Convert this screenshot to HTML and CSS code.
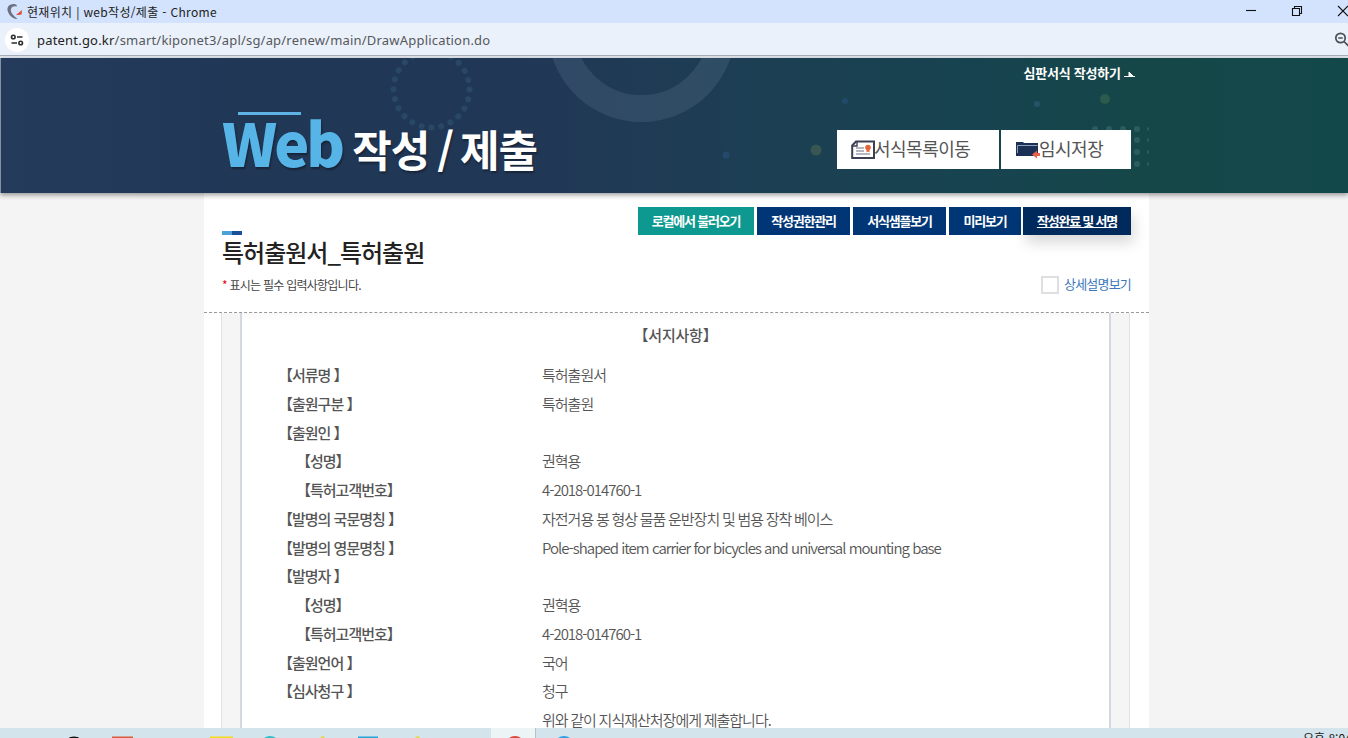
FILE: index.html
```html
<!DOCTYPE html>
<html lang="ko">

<head>
    <meta charset="UTF-8">
    <title>현재위치 | web작성/제출</title>
    <link rel="stylesheet" href="styles.css">
</head>

<body>
    <div class="titlebar">
        <svg class="favicon" width="18" height="18" viewBox="0 0 18 18">
            <path d="M8 1C2 1 0 5 2.500 10c2 4 6 6 9 6C7.500 13 4 9 5 6c.8-2.500 3-3 6-2.500C11 2 10 1 8 1z" fill="#6d7180" />
            <path d="M10 12l6-5-.5 4.500-3.500.5z" fill="#e04a32" />
        </svg>
        <span class="window-title">현재위치 | web작성/제출 - Chrome</span>
        <svg class="window-buttons" width="108" height="23" viewBox="0 0 108 23" fill="none" stroke="#111" stroke-width="1.1">
            <path d="M6 10.5h10" />
            <path d="M52.5 8.5h7v7h-7zM54.5 8.5v-2h7v7h-2" />
            <path d="M98 6l10 10M108 6l-10 10" />
        </svg>
    </div>
    <div class="addressbar">
        <div class="site-info">
            <svg width="14" height="14" viewBox="0 0 14 14" fill="none" stroke="#2b2d30" stroke-width="1.6">
                <circle cx="3.3" cy="4" r="1.8" />
                <path d="M7 4h5.5M1.5 10H7" />
                <circle cx="10.7" cy="10" r="1.8" />
            </svg>
        </div>
        <span class="url"><b>patent.go.kr</b>/smart/kiponet3/apl/sg/ap/renew/main/DrawApplication.do</span>
        <svg class="zoom-icon" width="14" height="16" viewBox="0 0 14 16" fill="none" stroke="#4a4d52" stroke-width="1.7">
            <circle cx="6.500" cy="6" r="4.7" />
            <path d="M4.300 6h4.4M10 9.5l5 5" />
        </svg>
    </div>

    <header>
        <div class="header-inner">
            <svg class="header-deco" width="945" height="135" viewBox="0 0 945 135">
                <circle cx="227.500" cy="31.500" r="38" fill="none" stroke="#294865" stroke-width="6" stroke-linecap="round" stroke-dasharray="0.01 9.94" />
                <circle cx="437.500" cy="-30" r="80.500" fill="none" stroke="#8aa0b8" stroke-opacity=".16" stroke-width="27" />
                <circle cx="522" cy="97" r="3.5" fill="#24496a" />
                <circle cx="612" cy="92" r="5.5" fill="#3a5652" />
                <circle cx="641" cy="43" r="3" fill="#204a68" />
                <circle cx="833" cy="46" r="3" fill="#235468" />
                <circle cx="901" cy="41" r="5" fill="#2c5a4c" />
                <g fill="#2d5c60">
                    <circle cx="891" cy="71" r="3" />
                    <circle cx="905" cy="71" r="3" />
                    <circle cx="919" cy="71" r="3" />
                    <circle cx="933" cy="71" r="3" />
                    <circle cx="933" cy="82" r="3" />
                    <circle cx="933" cy="94" r="3" />
                    <circle cx="933" cy="106" r="3" />
                    <circle cx="945" cy="71" r="2" />
                    <circle cx="945" cy="82" r="2" />
                    <circle cx="945" cy="94" r="2" />
                    <circle cx="945" cy="106" r="2" />
                </g>
            </svg>
            <h1 class="logo"><span class="web">Web</span><span class="kor">작성</span><span class="slash">/</span><span class="kor">제출</span></h1>
            <div class="header-right">
                <a class="trial-link">심판서식 작성하기
                    <svg width="11" height="7" viewBox="0 0 11 7"><path d="M0 5.500h11M5 1l4.500 4.500H5z" fill="#fff" stroke="#fff" stroke-width="1" /></svg>
                </a>
                <div class="header-buttons">
                    <a class="list-btn">
                        <svg width="24" height="20" viewBox="0 0 24 20" fill="none">
                            <path d="M5 1.500h18v16.500H1.200V5.500z" stroke="#3b4152" stroke-width="2" />
                            <path d="M1 6h5V1" stroke="#3b4152" stroke-width="1.400" />
                            <path d="M5 8h8M5 11h8M5 14h14" stroke="#687080" stroke-width="1.200" />
                            <circle cx="17" cy="7.500" r="2.800" fill="#e8643c" />
                            <path d="M15.500 9h3v3.500L17 11.500l-1.500 1z" fill="#e8643c" />
                        </svg><span>서식목록이동</span></a>
                    <a class="save-btn">
                        <svg width="25" height="18" viewBox="0 0 25 18">
                            <path d="M1 1h7l1 1h14v13H1z" fill="#1c2f55" />
                            <path d="M2.500 12V4.500h20" fill="none" stroke="#8fa0bd" />
                            <path d="M17 13.500l5-4v2.500h3v3h-3v2.500z" fill="#e8604c" />
                        </svg><span>임시저장</span></a>
                </div>
            </div>
        </div>
    </header>

    <div class="content">
        <div class="form-head">
            <div class="form-title">
                <div class="title-mark"></div>
                <h2>특허출원서_특허출원</h2>
                <p><em>*</em> 표시는 필수 입력사항입니다.</p>
            </div>
            <div class="form-tools">
                <div class="tool-buttons">
                    <a class="local">로컬에서 불러오기</a>
                    <a class="w93">작성권한관리</a>
                    <a class="w93">서식샘플보기</a>
                    <a class="preview">미리보기</a>
                    <a class="complete">작성완료 및 서명</a>
                </div>
                <label class="detail"><span class="checkbox"></span>상세설명보기</label>
            </div>
        </div>
        <div class="paper-wrap">
            <div class="paper">
                <h3>【서지사항】</h3>
                <dl>
                    <dt>【서류명 】</dt><dd>특허출원서</dd>
                    <dt>【출원구분 】</dt><dd>특허출원</dd>
                    <dt>【출원인 】</dt><dd></dd>
                    <dt class="sub">【성명】</dt><dd>권혁용</dd>
                    <dt class="sub">【특허고객번호】</dt><dd>4-2018-014760-1</dd>
                    <dt>【발명의 국문명칭 】</dt><dd>자전거용 봉 형상 물품 운반장치 및 범용 장착 베이스</dd>
                    <dt>【발명의 영문명칭 】</dt><dd class="eng">Pole-shaped item carrier for bicycles and universal mounting base</dd>
                    <dt>【발명자 】</dt><dd></dd>
                    <dt class="sub">【성명】</dt><dd>권혁용</dd>
                    <dt class="sub">【특허고객번호】</dt><dd>4-2018-014760-1</dd>
                    <dt>【출원언어 】</dt><dd>국어</dd>
                    <dt>【심사청구 】</dt><dd>청구</dd>
                    <dt></dt><dd>위와 같이 지식재산처장에게 제출합니다.</dd>
                </dl>
            </div>
        </div>
    </div>

    <footer class="taskbar">
        <svg width="600" height="10" viewBox="0 0 600 10">
            <path d="M491 0h44v10h-44z" fill="#edf4f6" />
            <path d="M535.500 0v10" stroke="#b4c2c9" />
            <ellipse cx="74" cy="10.500" rx="5" ry="2" fill="#111" />
            <path d="M112 8.500h21V10h-21z" fill="#d65a3c" />
            <path d="M210 8.500h23V10h-23z" fill="#f2dc1c" />
            <circle cx="270" cy="18" r="10" fill="#35bcc4" />
            <path d="M320 10l3-2.500 2 2.500zM415 10l3-2.500 2 2.500z" fill="#e8d840" />
            <path d="M358 8.500h20V10h-20z" fill="#1ea4d8" />
            <circle cx="515" cy="18" r="10" fill="#d9453a" />
            <circle cx="564" cy="18" r="10" fill="#2f9fe6" />
        </svg>
        <span class="clock">오후 8:04</span>
    </footer>
</body>

</html>
```
FILE: styles.css
```css
* {
    box-sizing: border-box;
}

body {
    margin: 0;
    height: 738px;
    overflow: hidden;
    display: flex;
    flex-direction: column;
    background-color: #f4f4f4;
    font-family: "Noto Sans CJK KR", sans-serif;
    color: #555;
}

h1, h2, h3, p, dl, dd {
    margin: 0;
}

.titlebar {
    height: 23px;
    flex: none;
    display: flex;
    align-items: center;
    padding-left: 6px;
    background-color: #d3e3fd;
}

.window-title {
    margin-left: 3px;
    font-size: 12px;
    line-height: 23px;
    letter-spacing: 0.33px;
    color: #222;
}

.window-buttons {
    margin-left: auto;
}

.addressbar {
    height: 35px;
    flex: none;
    display: flex;
    align-items: center;
    padding-left: 5px;
    background-color: #ebf1fa;
    border-bottom: 2px solid #e4e7ee;
    box-shadow: inset 0 -1px #a9afb8;
}

.site-info {
    width: 24px;
    height: 24px;
    border-radius: 50%;
    background-color: #fff;
    display: flex;
    align-items: center;
    justify-content: center;
}

.url {
    margin-left: 8px;
    font-family: "Noto Sans", sans-serif;
    font-size: 13px;
    letter-spacing: 0.2px;
    color: #55585d;
}

.url b {
    font-weight: normal;
    color: #222;
}

.zoom-icon {
    margin-left: auto;
}

header {
    height: 135px;
    flex: none;
    position: relative;
    z-index: 1;
    border-left: 1px solid #8590a0;
    background: linear-gradient(90deg, #243b5c 0, #213756 18%, #213756 38%, #1f3b55 48%, #1b4052 60%, #174350 72%, #154748 85%, #13484a 100%);
    box-shadow: 0 2px 5px rgba(0, 0, 0, .4);
}

.header-inner {
    position: relative;
    width: 945px;
    height: 135px;
    margin-left: 203px;
    padding: 0 18px;
    display: flex;
    justify-content: space-between;
}

.header-deco {
    position: absolute;
    left: 0;
    top: 0;
}

.logo {
    position: relative;
    display: flex;
    align-items: baseline;
    height: 135px;
    line-height: 135px;
    padding-top: 16px;
    color: #fff;
    text-shadow: 1px 2px 2px rgba(0, 0, 0, .35);
}

.logo::before {
    content: "";
    position: absolute;
    left: 16px;
    top: 54px;
    width: 63px;
    height: 3px;
    background-color: #5fb3e4;
}

.logo .web {
    font-size: 59px;
    font-weight: 900;
    letter-spacing: -3px;
    color: #56b4e6;
    margin-right: 10px;
}

.logo .kor,
.logo .slash {
    font-size: 43px;
    font-weight: 700;
    letter-spacing: -1px;
}

.logo .slash {
    margin: 0 7px 0 8px;
}

.header-right {
    position: relative;
    display: flex;
    flex-direction: column;
    align-items: flex-end;
}

.trial-link {
    height: 72px;
    padding: 5px 0 0;
    margin-right: -4px;
    font-size: 13px;
    line-height: 20px;
    font-weight: bold;
    letter-spacing: -0.25px;
    color: #fff;
}

.header-buttons {
    display: flex;
    gap: 2px;
}

.header-buttons a {
    height: 39px;
    display: flex;
    align-items: center;
    padding-left: 14px;
    background-color: #fff;
    font-size: 18px;
    letter-spacing: -0.5px;
}

.header-buttons span {
    line-height: 36px;
    height: 39px;
    margin-left: -1px;
}

.list-btn {
    width: 162px;
}

.save-btn {
    width: 130px;
}

.content {
    flex: 1;
    min-height: 0;
    width: 945px;
    margin-left: 204px;
    background-color: #fff;
    display: flex;
    flex-direction: column;
}

.form-head {
    height: 120px;
    flex: none;
    display: flex;
    justify-content: space-between;
    padding: 0 18px;
    border-bottom: 1px dashed #999;
}

.title-mark {
    width: 20px;
    height: 4px;
    margin-top: 38px;
    background: linear-gradient(90deg, #4aa3d8 50%, #1b4f9c 50%);
}

.form-title h2 {
    margin-top: 1px;
    font-size: 24px;
    line-height: 32px;
    font-weight: 500;
    letter-spacing: -1px;
    color: #222;
}

.form-title p {
    margin-top: 7px;
    font-size: 12px;
    line-height: 20px;
    letter-spacing: -0.75px;
    color: #444;
}

.form-title em {
    color: #e00;
    font-style: normal;
}

.form-tools {
    display: flex;
    flex-direction: column;
    align-items: flex-end;
    padding-top: 14px;
}

.tool-buttons {
    display: flex;
    gap: 3px;
}

.tool-buttons a {
    height: 28px;
    line-height: 27px;
    text-align: center;
    background-color: #003675;
    color: #fff;
    font-size: 13px;
    font-weight: bold;
    letter-spacing: -1.2px;
}

.tool-buttons .local {
    width: 116px;
    background-color: #0d998f;
}

.w93 {
    width: 93px;
}

.preview {
    width: 72px;
}

.tool-buttons .complete {
    width: 108px;
    margin-left: -1px;
    background-color: #002a5c;
    text-decoration: underline;
    box-shadow: 3px 8px 14px rgba(0, 0, 0, .15);
}

.detail {
    display: flex;
    align-items: center;
    margin-top: 39px;
    font-size: 13px;
    line-height: 20px;
    letter-spacing: -0.8px;
    color: #3c78bb;
}

.checkbox {
    width: 18px;
    height: 18px;
    margin: 2px 5px 0 0;
    border: 2px solid #dedfe1;
}

.paper-wrap {
    flex: 1;
    min-height: 0;
    width: 909px;
    margin-left: 17px;
    padding: 0 18px;
    border-left: 1px solid #dfe1e5;
    border-right: 1px solid #dfe1e5;
    background-color: #f5f5f5;
}

.paper {
    height: 100%;
    padding: 9px 36px 0;
    border-left: 2px solid #d4d8e2;
    border-right: 2px solid #d4d8e2;
    background: linear-gradient(#f9f9f9, #fff 8px);
}

.paper h3 {
    font-size: 15px;
    line-height: 26px;
    font-weight: 500;
    letter-spacing: -0.2px;
    text-align: center;
}

.paper dl {
    display: grid;
    grid-template-columns: 264px 1fr;
    grid-auto-rows: 28.76px;
    margin-top: 13px;
    font-size: 15px;
    line-height: 28px;
    letter-spacing: -1px;
    white-space: nowrap;
}

.paper dt {
    font-weight: 500;
}

.paper dt.sub {
    padding-left: 18px;
}

.paper dd {
    font-weight: 350;
    word-spacing: -0.5px;
}

.paper dd.eng {
    letter-spacing: -0.97px;
    word-spacing: 0;
}

.taskbar {
    height: 10px;
    flex: none;
    position: relative;
    z-index: 2;
    overflow: hidden;
    display: flex;
    justify-content: space-between;
    background-color: #d4e4ec;
}

.clock {
    width: 45px;
    margin-top: 2px;
    font-size: 12px;
    line-height: 16px;
    white-space: nowrap;
    color: #222;
}
```
